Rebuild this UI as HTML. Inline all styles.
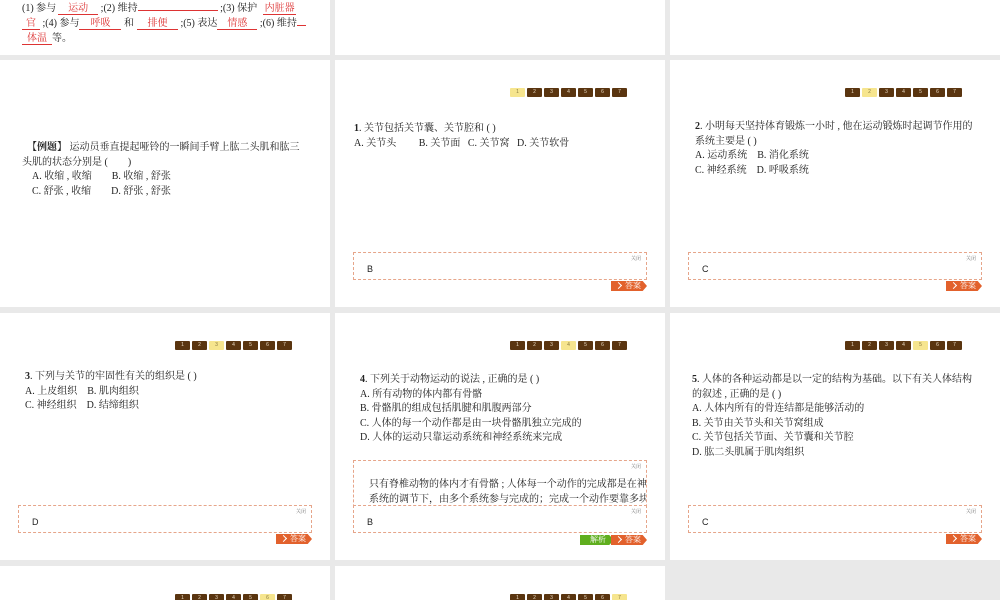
<!DOCTYPE html>
<html style="width:1000px;height:600px;overflow:hidden"><head><meta charset="utf-8">
<style>
*{margin:0;padding:0;box-sizing:border-box}
body{width:1000px;height:600px;background:#e9e9e9;position:relative;overflow:hidden;font-family:"Liberation Serif","Noto Serif CJK SC",serif;font-size:10px;color:#222}
.s{position:absolute;width:330px;height:247px;background:#fff;overflow:hidden}
.nav{position:absolute;left:175px;top:28px;display:flex;gap:2px}
.nav span{width:15px;height:9px;background:#5a3510;color:#e8d8c0;font-size:5px;line-height:9px;text-align:center;border-radius:1px;font-family:"Liberation Sans",sans-serif}
.nav span.a{background:#f6e58e;color:#8a7a40}
.q{position:absolute;line-height:14.5px;white-space:nowrap}
.box{position:absolute;left:18px;width:294px;height:28px;border:1px dashed #e6a58a;background:#fff}
.box .c{position:absolute;right:5px;top:2px;font-size:5px;color:#777}
.box .b{position:absolute;left:13px;top:11px;font-family:"Liberation Sans",sans-serif;font-size:9px}
.ans{position:absolute;left:276px;width:36px;height:10px;background:#e2612c;color:#fff;font-size:8px;line-height:10px;padding-left:14px;clip-path:polygon(0 0,88% 0,100% 50%,88% 100%,0 100%)}
.ans:before{content:"";position:absolute;left:5px;top:2px;width:4px;height:4px;border-right:1.5px solid #fff;border-bottom:1.5px solid #fff;transform:rotate(-45deg)}
.jx{position:absolute;left:245px;width:34px;height:10px;background:#5fae1e;color:#fff;font-size:8px;line-height:10px;padding-left:10px;clip-path:polygon(0 0,86% 0,100% 50%,86% 100%,0 100%)}
.u{display:inline-block;border-bottom:1px solid #d33;color:#d33;text-align:center;line-height:11px;vertical-align:baseline}
.t{position:absolute;white-space:nowrap;line-height:11px}
</style></head><body>

<div class="s" style="left:0;top:0;height:55px">
<div class="t" style="left:22px;top:3px">(1) 参与<span class="u" style="width:40px;margin-left:2px">运动</span> ;(2) 维持<span class="u" style="width:80px"></span> ;(3) 保护<span class="u" style="width:33px;margin-left:6px">内脏器</span></div>
<div class="t" style="left:22px;top:18px"><span class="u" style="width:18px">官</span> ;(4) 参与<span class="u" style="width:42px">呼吸</span> 和<span class="u" style="width:41px;margin-left:3px">排便</span> ;(5) 表达<span class="u" style="width:40px">情感</span> ;(6) 维持<span class="u" style="width:9px"></span></div>
<div class="t" style="left:22px;top:33px"><span class="u" style="width:30px">体温</span>等。</div>
</div>
<div class="s" style="left:335px;top:0;height:55px"></div>
<div class="s" style="left:670px;top:0;height:55px"></div>

<div class="s" style="left:0;top:60px">
<div class="q" style="left:22px;top:81px"><b>&nbsp;&nbsp;【例题】</b> 运动员垂直提起哑铃的一瞬间手臂上肱二头肌和肱三<br>头肌的状态分别是 (&nbsp;&nbsp;&nbsp;&nbsp;&nbsp;&nbsp;&nbsp;&nbsp;)<br>&nbsp;&nbsp;&nbsp;&nbsp;A. 收缩 , 收缩&nbsp;&nbsp;&nbsp;&nbsp;&nbsp;&nbsp;&nbsp;&nbsp;B. 收缩 , 舒张<br>&nbsp;&nbsp;&nbsp;&nbsp;C. 舒张 , 收缩&nbsp;&nbsp;&nbsp;&nbsp;&nbsp;&nbsp;&nbsp;&nbsp;D. 舒张 , 舒张</div>
</div>
<div class="s" style="left:335px;top:60px">
<div class="nav"><span class="a">1</span><span>2</span><span>3</span><span>4</span><span>5</span><span>6</span><span>7</span></div>
<div class="q" style="left:19px;top:62px"><b>1</b>. 关节包括关节囊、关节腔和 ( )<br>A. 关节头&nbsp;&nbsp;&nbsp;&nbsp;&nbsp;&nbsp;&nbsp;&nbsp;&nbsp;B. 关节面&nbsp;&nbsp;&nbsp;C. 关节窝&nbsp;&nbsp;&nbsp;D. 关节软骨</div>
<div class="box" style="top:192px"><span class="c">关闭</span><span class="b">B</span></div>
<div class="ans" style="top:221px">答案</div>
</div>
<div class="s" style="left:670px;top:60px">
<div class="nav"><span>1</span><span class="a">2</span><span>3</span><span>4</span><span>5</span><span>6</span><span>7</span></div>
<div class="q" style="left:25px;top:60px"><b>2</b>. 小明每天坚持体育锻炼一小时 , 他在运动锻炼时起调节作用的<br>系统主要是 ( )<br>A. 运动系统&nbsp;&nbsp;&nbsp;&nbsp;B. 消化系统<br>C. 神经系统&nbsp;&nbsp;&nbsp;&nbsp;D. 呼吸系统</div>
<div class="box" style="top:192px"><span class="c">关闭</span><span class="b">C</span></div>
<div class="ans" style="top:221px">答案</div>
</div>

<div class="s" style="left:0;top:313px">
<div class="nav"><span>1</span><span>2</span><span class="a">3</span><span>4</span><span>5</span><span>6</span><span>7</span></div>
<div class="q" style="left:25px;top:57px"><b>3</b>. 下列与关节的牢固性有关的组织是 ( )<br>A. 上皮组织&nbsp;&nbsp;&nbsp;&nbsp;B. 肌肉组织<br>C. 神经组织&nbsp;&nbsp;&nbsp;&nbsp;D. 结缔组织</div>
<div class="box" style="top:192px"><span class="c">关闭</span><span class="b">D</span></div>
<div class="ans" style="top:221px">答案</div>
</div>
<div class="s" style="left:335px;top:313px">
<div class="nav"><span>1</span><span>2</span><span>3</span><span class="a">4</span><span>5</span><span>6</span><span>7</span></div>
<div class="q" style="left:25px;top:60px"><b>4</b>. 下列关于动物运动的说法 , 正确的是 ( )<br>A. 所有动物的体内都有骨骼<br>B. 骨骼肌的组成包括肌腱和肌腹两部分<br>C. 人体的每一个动作都是由一块骨骼肌独立完成的<br>D. 人体的运动只靠运动系统和神经系统来完成</div>
<div class="box" style="top:147px;height:72px;overflow:hidden"><span class="c">关闭</span><div class="q" style="left:15px;top:17px">只有脊椎动物的体内才有骨骼 ; 人体每一个动作的完成都是在神经<br>系统的调节下，由多个系统参与完成的；完成一个动作要靠多块骨</div></div>
<div class="box" style="top:192px"><span class="c">关闭</span><span class="b">B</span></div>
<div class="jx" style="top:222px">解析</div>
<div class="ans" style="top:222px">答案</div>
</div>
<div class="s" style="left:670px;top:313px">
<div class="nav"><span>1</span><span>2</span><span>3</span><span>4</span><span class="a">5</span><span>6</span><span>7</span></div>
<div class="q" style="left:22px;top:60px"><b>5</b>. 人体的各种运动都是以一定的结构为基础。以下有关人体结构<br>的叙述 , 正确的是 ( )<br>A. 人体内所有的骨连结都是能够活动的<br>B. 关节由关节头和关节窝组成<br>C. 关节包括关节面、关节囊和关节腔<br>D. 肱二头肌属于肌肉组织</div>
<div class="box" style="top:192px"><span class="c">关闭</span><span class="b">C</span></div>
<div class="ans" style="top:221px">答案</div>
</div>

<div class="s" style="left:0;top:566px;height:34px">
<div class="nav"><span>1</span><span>2</span><span>3</span><span>4</span><span>5</span><span class="a">6</span><span>7</span></div>
</div>
<div class="s" style="left:335px;top:566px;height:34px">
<div class="nav"><span>1</span><span>2</span><span>3</span><span>4</span><span>5</span><span>6</span><span class="a">7</span></div>
</div>
</body></html>
